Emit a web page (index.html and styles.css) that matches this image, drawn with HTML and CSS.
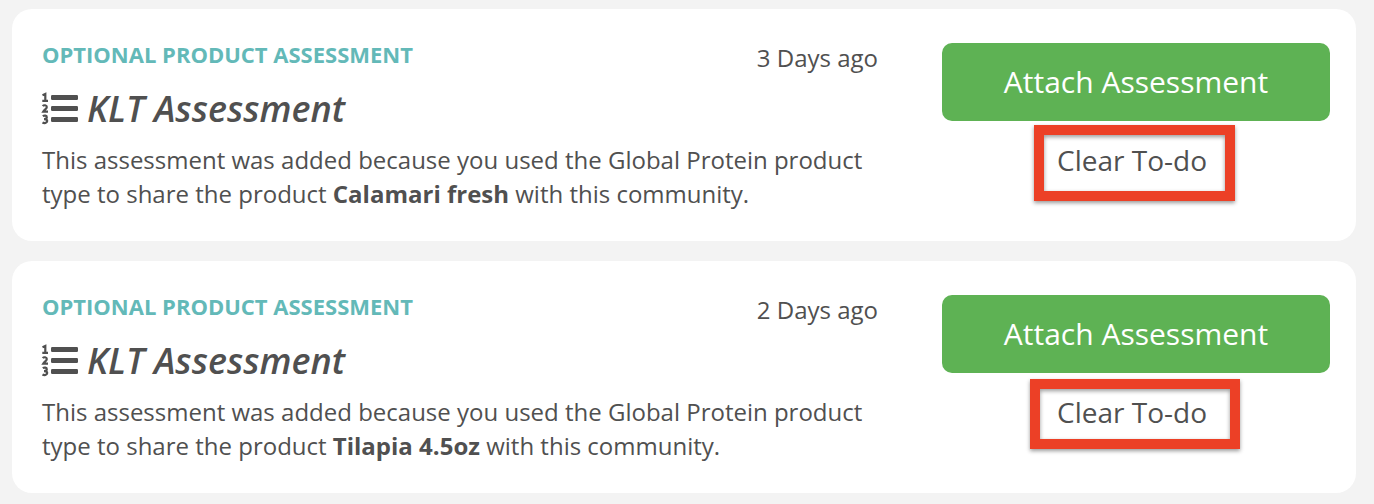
FILE: index.html
```
<!DOCTYPE html>
<html lang="en">
<head>
<meta charset="utf-8">
<title>To-dos</title>
<link rel="stylesheet" href="styles.css">
</head>
<body>
<main class="todos">
  <article class="card">
    <div class="details">
      <div class="head">
        <p class="kind">OPTIONAL PRODUCT ASSESSMENT</p>
        <time class="age">3 Days ago</time>
      </div>
      <h2 class="title"><svg class="icon" viewBox="0 0 36 32" aria-hidden="true"><g><rect x="9" y="2" width="27" height="5" rx="1.200"/><rect x="9" y="13" width="27" height="5" rx="1.200"/><rect x="9" y="24" width="27" height="5" rx="1.200"/></g><path class="digits" d="M.5 2.200L3.300 1v6.800M.3 7.800h5.700M.8 13.200c1-1.500 4-1.200 4 .8 0 1.800-2.500 2.800-3.600 4.700h4.800M.8 23.200c1.500-1 4-.8 4 1 0 1.400-1.300 1.900-2.800 1.900 2 0 3.200.6 3.200 2 0 2-3 2.400-4.700 1.400"/></svg>KLT Assessment</h2>
      <p class="text">This assessment was added because you used the Global Protein product type to share the product <strong>Calamari fresh</strong> with this community.</p>
    </div>
    <div class="actions">
      <button class="attach" type="button">Attach Assessment</button>
      <button class="clear" type="button">Clear To-do<span class="mark mark-tall"></span></button>
    </div>
  </article>
  <article class="card">
    <div class="details">
      <div class="head">
        <p class="kind">OPTIONAL PRODUCT ASSESSMENT</p>
        <time class="age">2 Days ago</time>
      </div>
      <h2 class="title"><svg class="icon" viewBox="0 0 36 32" aria-hidden="true"><g><rect x="9" y="2" width="27" height="5" rx="1.200"/><rect x="9" y="13" width="27" height="5" rx="1.200"/><rect x="9" y="24" width="27" height="5" rx="1.200"/></g><path class="digits" d="M.5 2.200L3.300 1v6.800M.3 7.800h5.700M.8 13.200c1-1.500 4-1.200 4 .8 0 1.800-2.500 2.800-3.600 4.700h4.800M.8 23.200c1.500-1 4-.8 4 1 0 1.400-1.300 1.900-2.800 1.900 2 0 3.200.6 3.200 2 0 2-3 2.400-4.700 1.400"/></svg>KLT Assessment</h2>
      <p class="text">This assessment was added because you used the Global Protein product type to share the product <strong>Tilapia 4.5oz</strong> with this community.</p>
    </div>
    <div class="actions">
      <button class="attach" type="button">Attach Assessment</button>
      <button class="clear" type="button">Clear To-do<span class="mark mark-wide"></span></button>
    </div>
  </article>
</main>
</body>
</html>
```
FILE: styles.css
```
* { box-sizing: border-box; }
body {
  margin: 0;
  background: #f3f3f3;
  color: #505050;
  font-family: "Open Sans", sans-serif;
}
.todos {
  display: flex;
  flex-direction: column;
  gap: 20px;
  padding: 9px 18px 11px 12px;
}
.card {
  display: flex;
  gap: 64px;
  padding: 29px 26px 30px 30px;
  background: #fff;
  border-radius: 20px;
}
.details { flex: 1; }
.head {
  display: flex;
  justify-content: space-between;
}
.kind {
  margin: 0;
  color: #63b9b8;
  font-size: 22px;
  font-weight: 700;
  line-height: 32px;
}
.age {
  padding-top: 3px;
  font-size: 24px;
  line-height: 34px;
}
.title {
  display: flex;
  align-items: center;
  gap: 9px;
  margin: 9px 0;
  font-size: 36px;
  font-style: italic;
  font-weight: 600;
  line-height: 50px;
}
.icon {
  width: 36px;
  height: 32px;
  overflow: visible;
  fill: currentColor;
}
.digits {
  fill: none;
  stroke: currentColor;
  stroke-width: 2.2;
}
.text {
  margin: 0;
  font-size: 24px;
  line-height: 34px;
}
.actions {
  display: flex;
  flex-direction: column;
  align-items: center;
  width: 388px;
  padding-top: 5px;
}
button {
  border: 0;
  font: inherit;
  cursor: pointer;
}
.attach {
  width: 100%;
  padding: 18px;
  border-radius: 10px;
  background: #5eb254;
  color: #fff;
  font-size: 30px;
  line-height: 42px;
}
.clear {
  position: relative;
  margin-top: 19px;
  padding: 0 8px 0 0;
  background: none;
  color: #505050;
  font-size: 28px;
  line-height: 40px;
}
.mark {
  position: absolute;
  border: 10px solid #ec4026;
  box-shadow: 0 2px 4px rgba(0, 0, 0, 0.4), inset 0 2px 4px rgba(0, 0, 0, 0.4);
}
.mark-tall { inset: -15px -20px -21px -23px; }
.mark-wide { inset: -13px -25px -17px -27px; }
```
